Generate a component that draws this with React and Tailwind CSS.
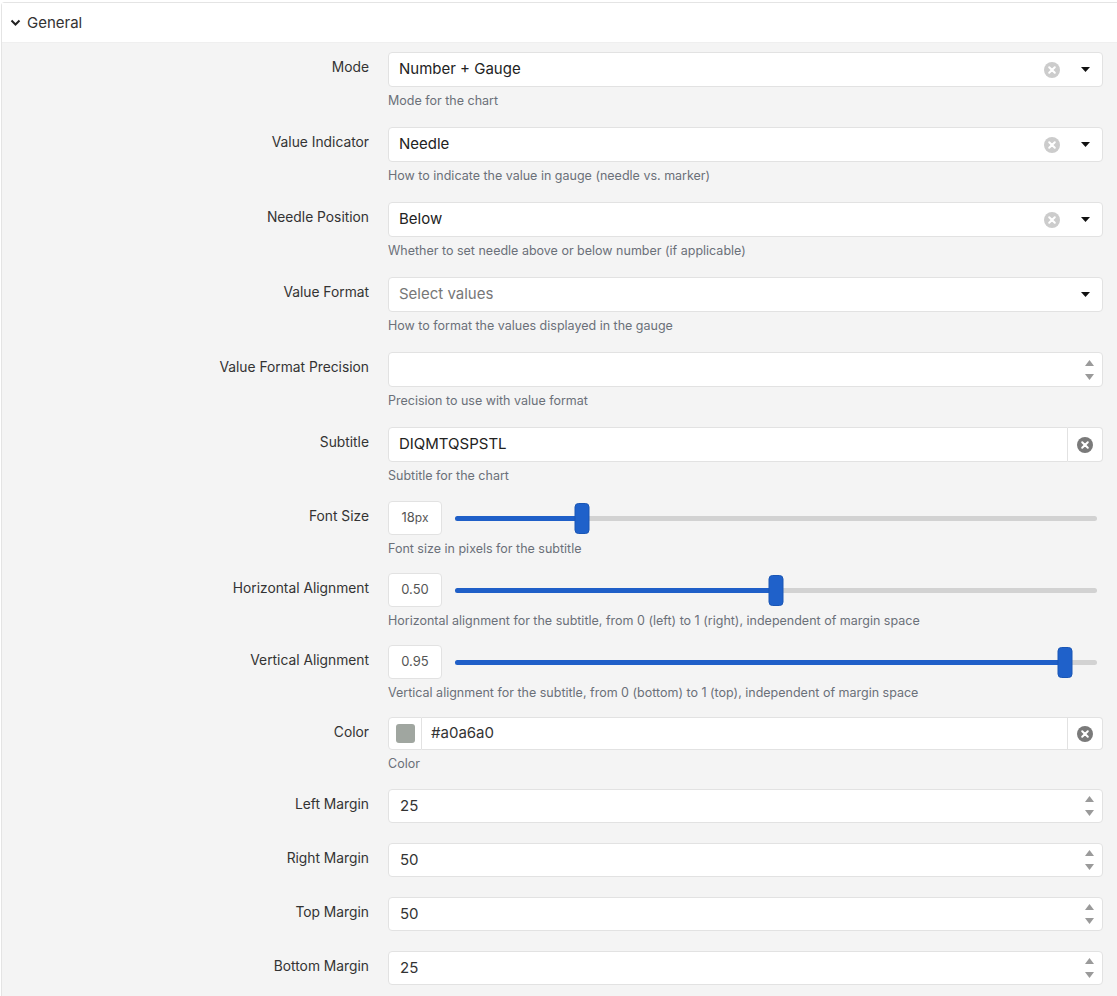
import React from "react";

const FONT = { fontFamily: "Inter, 'Noto Sans', 'Liberation Sans', sans-serif" };

function ClearIcon({ dark }) {
  return (
    <svg width="16" height="16" viewBox="0 0 16 16">
      <circle cx="8" cy="8" r="8" fill={dark ? "#7a7a7a" : "#cccccc"} />
      <path d="M5.2 5.2 L10.8 10.8 M10.8 5.2 L5.2 10.8" stroke="#fff" strokeWidth="2" strokeLinecap="round" />
    </svg>
  );
}

function Caret() {
  return (
    <svg width="9" height="5" viewBox="0 0 9 5">
      <path d="M0 0 H9 L4.5 5 Z" fill="#111" />
    </svg>
  );
}

function Spinner() {
  return (
    <div className="flex flex-col items-center justify-center gap-[8px] w-[22px]">
      <svg width="9" height="6" viewBox="0 0 9 6">
        <path d="M0 6 H9 L4.5 0 Z" fill="#9a9a9a" />
      </svg>
      <svg width="9" height="6" viewBox="0 0 9 6">
        <path d="M0 0 H9 L4.5 6 Z" fill="#9a9a9a" />
      </svg>
    </div>
  );
}

function Select({ value, placeholder, clearable }) {
  return (
    <div className="h-[35px] bg-white border border-[#e2e2e2] rounded-[4px] flex items-center pl-[10px] pr-[12px]">
      <span className={value ? "flex-1 text-[15px] text-[#222]" : "flex-1 text-[15px] text-[#777]"}>
        {value || placeholder}
      </span>
      {clearable && (
        <span className="mr-[21px] flex">
          <ClearIcon />
        </span>
      )}
      <Caret />
    </div>
  );
}

function NumberInput({ value, h = "h-[34px]" }) {
  return (
    <div className={`${h} bg-white border border-[#e2e2e2] rounded-[4px] flex items-center pl-[11px] pr-[2px]`}>
      <span className="flex-1 text-[15px] text-[#333]">{value}</span>
      <Spinner />
    </div>
  );
}

function Slider({ display, unit, frac }) {
  return (
    <div className="h-[34px] flex items-center">
      <div className="w-[54px] h-[34px] bg-white border border-[#e2e2e2] rounded-[4px] flex items-center justify-center text-[#555]">
        <span className="text-[13px]">{display}</span>
        {unit && <span className="text-[12px]">{unit}</span>}
      </div>
      <div className="flex-1 ml-[13px] mr-[6px] relative h-[34px] flex items-center">
        <div className="w-full h-[5px] rounded-full bg-[#d2d2d2]" />
        <div className="absolute left-0 h-[5px] rounded-full bg-[#1f5fc8]" style={{ width: `${frac * 100}%` }} />
        <div
          className="absolute w-[15px] h-[31px] rounded-[4px] bg-[#1f61ca] border border-[#1a56b5] -translate-x-1/2"
          style={{ left: `${frac * 100}%` }}
        />
      </div>
    </div>
  );
}

function Row({ label, help, children, mb = "mb-[18px]" }) {
  return (
    <div className={`flex ${mb}`}>
      <div className="w-[367px] text-right text-[13.8px] leading-[20px] text-[#333] pt-[5px]">{label}</div>
      <div className="flex-1 ml-[19px] mr-[14px]">
        {children}
        {help && <div className="mt-[5px] text-[12.5px] leading-[17px] text-[#6b7079]">{help}</div>}
      </div>
    </div>
  );
}

export default function App() {
  return (
    <div className="bg-white pt-[2px] pl-px min-h-[996px]" style={FONT}>
      <div className="border-l border-t border-[#e4e4e4] rounded-tl-[4px]">
        <div className="h-[40px] bg-white flex items-center pl-[8px] pt-[1px] border-b border-[#efefef]">
          <svg width="11" height="8" viewBox="0 0 11 8" className="mr-[6px]">
            <path d="M1.5 1.5 L5.5 5.5 L9.5 1.5" stroke="#222" strokeWidth="2" fill="none" />
          </svg>
          <span className="text-[15px] text-[#333]">General</span>
        </div>
        <div className="bg-[#f4f4f4] pt-[9px] pb-[8px]">
          <Row label="Mode" help="Mode for the chart">
            <Select value="Number + Gauge" clearable />
          </Row>
          <Row label="Value Indicator" help="How to indicate the value in gauge (needle vs. marker)">
            <Select value="Needle" clearable />
          </Row>
          <Row label="Needle Position" help="Whether to set needle above or below number (if applicable)">
            <Select value="Below" clearable />
          </Row>
          <Row label="Value Format" help="How to format the values displayed in the gauge">
            <Select placeholder="Select values" />
          </Row>
          <Row label="Value Format Precision" help="Precision to use with value format">
            <NumberInput value="" h="h-[35px]" />
          </Row>
          <Row label="Subtitle" help="Subtitle for the chart" mb="mb-[17px]">
            <div className="h-[35px] flex">
              <div className="flex-1 bg-white border border-[#e2e2e2] rounded-l-[4px] flex items-center pl-[10px] text-[15px] text-[#222]">
                DIQMTQSPSTL
              </div>
              <div className="w-[35px] bg-white border border-l-0 border-[#e2e2e2] rounded-r-[4px] flex items-center justify-center">
                <ClearIcon dark />
              </div>
            </div>
          </Row>
          <Row label="Font Size" help="Font size in pixels for the subtitle" mb="mb-[16px]">
            <Slider display="18" unit="px" frac={0.198} />
          </Row>
          <Row label="Horizontal Alignment" help="Horizontal alignment for the subtitle, from 0 (left) to 1 (right), independent of margin space" mb="mb-[16px]">
            <Slider display="0.50" frac={0.5} />
          </Row>
          <Row label="Vertical Alignment" help="Vertical alignment for the subtitle, from 0 (bottom) to 1 (top), independent of margin space" mb="mb-[16px]">
            <Slider display="0.95" frac={0.95} />
          </Row>
          <Row label="Color" help="Color" mb="mb-[17px]">
            <div className="h-[33px] flex">
              <div className="w-[34px] bg-white border border-[#e2e2e2] rounded-l-[4px] flex items-center justify-center">
                <div className="w-[19px] h-[19px] rounded-[3px] bg-[#a0a6a0]" />
              </div>
              <div className="flex-1 bg-white border border-l-0 border-[#e2e2e2] flex items-center pl-[9px] text-[15px] text-[#333]">
                #a0a6a0
              </div>
              <div className="w-[35px] bg-white border border-l-0 border-[#e2e2e2] rounded-r-[4px] flex items-center justify-center">
                <ClearIcon dark />
              </div>
            </div>
          </Row>
          <Row label="Left Margin" mb="mb-[20px]">
            <NumberInput value="25" />
          </Row>
          <Row label="Right Margin" mb="mb-[20px]">
            <NumberInput value="50" />
          </Row>
          <Row label="Top Margin" mb="mb-[20px]">
            <NumberInput value="50" />
          </Row>
          <Row label="Bottom Margin" mb="mb-[20px]">
            <NumberInput value="25" />
          </Row>
        </div>
      </div>
    </div>
  );
}
